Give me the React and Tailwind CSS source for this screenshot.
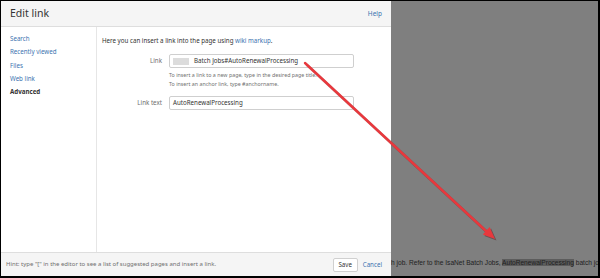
export default function App() {
  const nav = ['Search', 'Recently viewed', 'Files', 'Web link']
  return (
    <div className="relative w-[600px] h-[278px] bg-black pt-px pl-px pr-[2px] pb-[2px] overflow-hidden">
      <div className="flex h-full">
        {/* Dialog */}
        <div className="w-[390px] h-full flex flex-col bg-white font-['Noto_Sans',sans-serif]">
          <div className="h-[26px] shrink-0 bg-[#f5f5f5] border-b border-[#dedede] flex items-center justify-between pl-[9px] pr-[9px]">
            <span className="text-[10.5px] text-[#333]">Edit link</span>
            <span className="text-[6.5px] text-[#3b73af]">Help</span>
          </div>
          <div className="flex-1 flex min-h-0">
            {/* Sidebar */}
            <div className="w-[96px] shrink-0 border-r border-[#e6e6e6] pt-[5px] pl-[9px] flex flex-col">
              {nav.map(n => (
                <div key={n} className="h-[13.3px] flex items-center text-[6.2px] text-[#3b73af]">{n}</div>
              ))}
              <div className="h-[13.3px] flex items-center text-[6.2px] font-bold text-[#333]">Advanced</div>
            </div>
            {/* Main */}
            <div className="flex-1 pl-[5px] pt-[9px] text-[#333]">
              <div className="h-[10px] flex items-center text-[6.2px]">
                Here you can insert a link into the page using&nbsp;<span className="text-[#3b73af]">wiki markup</span>.
              </div>
              <div className="mt-[8px] flex items-center">
                <div className="w-[60px] text-right text-[6.2px] text-[#707070]">Link</div>
                <div className="ml-[7px] w-[185px] h-[14px] border border-[#cfcfcf] rounded-[2px] flex items-center pl-[3px] text-[6.2px]">
                  <span className="w-[16px] h-[7px] bg-[#dcdcdc] mr-[5px]"></span>
                  Batch Jobs#AutoRenewalProcessing
                </div>
              </div>
              <div className="ml-[67px] mt-[3px] text-[5.3px] text-[#707070] leading-[9px]">
                <div>To insert a link to a new page, type in the desired page title.</div>
                <div>To insert an anchor link, type #anchorname.</div>
              </div>
              <div className="mt-[7px] flex items-center">
                <div className="w-[60px] text-right text-[6.2px] text-[#707070]">Link text</div>
                <div className="ml-[7px] w-[185px] h-[14px] border border-[#cfcfcf] rounded-[2px] flex items-center pl-[3px] text-[6.2px]">
                  AutoRenewalProcessing
                </div>
              </div>
            </div>
          </div>
          <div className="h-[24px] shrink-0 bg-[#f5f5f5] border-t border-[#dedede] flex items-center justify-between pl-[5px] pr-[9px]">
            <span className="text-[6px] text-[#707070]">Hint: type "[" in the editor to see a list of suggested pages and insert a link.</span>
            <div className="flex items-center gap-[5px]">
              <div className="h-[14px] w-[25px] bg-white border border-[#d0d0d0] rounded-[2px] flex items-center justify-center text-[6.2px] text-[#333]">Save</div>
              <span className="text-[6.2px] text-[#3b73af]">Cancel</span>
            </div>
          </div>
        </div>
        {/* Overlay */}
        <div className="flex-1 h-full bg-[#7f7f7f] flex flex-col justify-end pb-[8px] overflow-hidden">
          <div className="whitespace-nowrap text-[6.6px] text-[#1e1e1e] font-['Liberation_Sans',sans-serif]">
            h job. Refer to the IsaNet Batch Jobs, <span className="bg-[#5c5c5c]">AutoRenewalProcessing</span> batch job
          </div>
        </div>
      </div>
      <svg className="absolute inset-0 pointer-events-none" width="600" height="278" viewBox="0 0 600 278">
        <g opacity="0.35" transform="translate(1.5,1.5)">
          <line x1="305" y1="63" x2="486" y2="231" stroke="#400" strokeWidth="2.6" />
          <polygon points="495,239 482.8,234.5 489.6,227.1" fill="#400" />
        </g>
        <line x1="305" y1="63" x2="486" y2="231" stroke="#e8383d" strokeWidth="2.4" strokeLinecap="round" />
        <polygon points="495,239 482.8,234.5 489.6,227.1" fill="#e8383d" />
      </svg>
    </div>
  )
}
